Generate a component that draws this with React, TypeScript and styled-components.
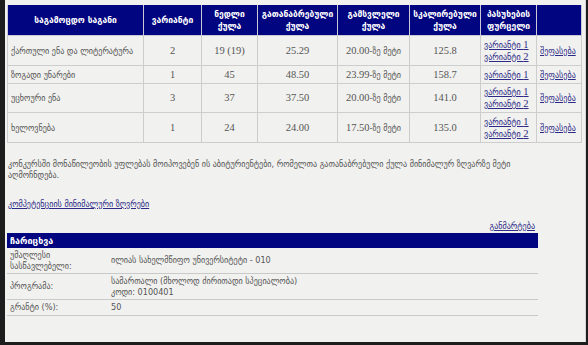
import styled, { createGlobalStyle } from "styled-components";

const GlobalStyle = createGlobalStyle`
  html, body {
    margin: 0;
    padding: 0;
    background: #1d1d1d;
  }
  body {
    font-family: "DejaVu Sans Condensed", "DejaVu Sans", sans-serif;
    font-size: 9px;
    color: #4a4a4a;
  }
`;

const Frame = styled.div`
  margin-left: 5px;
  width: 581px;
  height: 342px;
  box-sizing: border-box;
  padding: 5px 0 0 2px;
  background: #f1f1ef;
  border-right: 1px solid #d6d6d4;
  overflow: hidden;
`;

const ScoreTable = styled.table`
  width: 574px;
  border-collapse: collapse;
  table-layout: fixed;
`;

const HeadCell = styled.th`
  height: 30px;
  padding: 0 1px;
  background: #020580;
  color: #ffffff;
  font-family: "DejaVu Sans", sans-serif;
  font-size: 8.5px;
  font-weight: bold;
  line-height: 12px;
  text-align: center;
  border: 1px solid #c9c9d8;
  border-top: none;
`;

const Cell = styled.td<{ align?: string; h: number }>`
  height: ${(p) => p.h}px;
  padding: 0 3px;
  text-align: ${(p) => p.align || "center"};
  border: 1px solid #cdcdcd;
  line-height: 12px;
  color: #555;
  vertical-align: middle;
  white-space: nowrap;
  overflow: hidden;
`;

const Num = styled.span`
  font-family: "Liberation Serif", "DejaVu Sans", serif;
  font-size: 10.5px;
`;

const Link = styled.a`
  color: #2c2a86;
  text-decoration: underline;
  display: block;
  line-height: 12px;
  cursor: pointer;
`;

const Note = styled.p`
  width: 535px;
  margin: 16px 0 0 1px;
  line-height: 11px;
  color: #555;
`;

const MinLink = styled.a`
  display: block;
  margin: 18px 0 0 1px;
  color: #2c2a86;
  text-decoration: underline;
`;

const ExplainRow = styled.div`
  width: 528px;
  margin-top: 12px;
  text-align: right;
  line-height: 11px;
  a {
    color: #2c2a86;
    text-decoration: underline;
  }
`;

const EnrollTable = styled.table`
  width: 531px;
  margin-top: 1px;
  border-collapse: collapse;
  table-layout: fixed;
`;

const EnrollHead = styled.th`
  height: 15px;
  padding: 0 3px;
  background: #020580;
  color: #fff;
  font-family: "DejaVu Sans", sans-serif;
  font-weight: bold;
  text-align: left;
`;

const Label = styled.td<{ h: number }>`
  height: ${(p) => p.h}px;
  padding: 0 3px;
  line-height: 11px;
  color: #555;
  border-bottom: 1px solid #c9c9c9;
`;

const Value = styled.td`
  padding: 0 3px;
  line-height: 11px;
  color: #555;
  border-bottom: 1px solid #c9c9c9;
`;

const cols = [
  { w: 136, t: "საგამოცდო საგანი" },
  { w: 58, t: "ვარიანტი" },
  { w: 56, t: "ნედლი ქულა" },
  { w: 80, t: "გათანაბრებული ქულა" },
  { w: 72, t: "გამსვლელი ქულა" },
  { w: 71, t: "სკალირებული ქულა" },
  { w: 56, t: "პასუხების ფურცელი" },
  { w: 45, t: "" },
];

const rows = [
  { name: "ქართული ენა და ლიტერატურა", variant: "2", raw: "19 (19)", eq: "25.29", pass: "20.00", scaled: "125.8", sheets: 2, h: 29 },
  { name: "ზოგადი უნარები", variant: "1", raw: "45", eq: "48.50", pass: "23.99", scaled: "158.7", sheets: 1, h: 17 },
  { name: "უცხოური ენა", variant: "3", raw: "37", eq: "37.50", pass: "20.00", scaled: "141.0", sheets: 2, h: 28 },
  { name: "ხელოვნება", variant: "1", raw: "24", eq: "24.00", pass: "17.50", scaled: "135.0", sheets: 2, h: 29 },
];

export default function App() {
  return (
    <>
      <GlobalStyle />
      <Frame>
        <ScoreTable>
          <colgroup>
            {cols.map((c, i) => (
              <col key={i} style={{ width: c.w }} />
            ))}
          </colgroup>
          <thead>
            <tr>
              {cols.map((c, i) => (
                <HeadCell key={i}>{c.t}</HeadCell>
              ))}
            </tr>
          </thead>
          <tbody>
            {rows.map((r) => (
              <tr key={r.name}>
                <Cell h={r.h} align="left">
                  {r.name}
                </Cell>
                <Cell h={r.h}>
                  <Num>{r.variant}</Num>
                </Cell>
                <Cell h={r.h}>
                  <Num>{r.raw}</Num>
                </Cell>
                <Cell h={r.h}>
                  <Num>{r.eq}</Num>
                </Cell>
                <Cell h={r.h}>
                  <Num>{r.pass}</Num>-ზე მეტი
                </Cell>
                <Cell h={r.h}>
                  <Num>{r.scaled}</Num>
                </Cell>
                <Cell h={r.h} align="left">
                  {Array.from({ length: r.sheets }).map((_, i) => (
                    <Link key={i}>
                      ვარიანტი <Num>{i + 1}</Num>
                    </Link>
                  ))}
                </Cell>
                <Cell h={r.h} align="left">
                  <Link>შეფასება</Link>
                </Cell>
              </tr>
            ))}
          </tbody>
        </ScoreTable>

        <Note>
          კონკურსში მონაწილეობის უფლებას მოიპოვებენ ის აბიტურიენტები, რომელთა
          გათანაბრებული ქულა მინიმალურ ზღვარზე მეტი აღმოჩნდება.
        </Note>

        <MinLink>კომპეტენციის მინიმალური ზღვრები</MinLink>

        <ExplainRow>
          <a>განმარტება</a>
        </ExplainRow>

        <EnrollTable>
          <colgroup>
            <col style={{ width: 101 }} />
            <col />
          </colgroup>
          <thead>
            <tr>
              <EnrollHead colSpan={2}>ჩარიცხვა</EnrollHead>
            </tr>
          </thead>
          <tbody>
            <tr>
              <Label h={25}>უმაღლესი სასწავლებელი:</Label>
              <Value>ილიას სახელმწიფო უნივერსიტეტი - 010</Value>
            </tr>
            <tr>
              <Label h={25}>პროგრამა:</Label>
              <Value>
                სამართალი (მხოლოდ ძირითადი სპეციალობა)
                <br />
                კოდი: 0100401
              </Value>
            </tr>
            <tr>
              <Label h={15}>გრანტი (%):</Label>
              <Value>50</Value>
            </tr>
          </tbody>
        </EnrollTable>
      </Frame>
    </>
  );
}
